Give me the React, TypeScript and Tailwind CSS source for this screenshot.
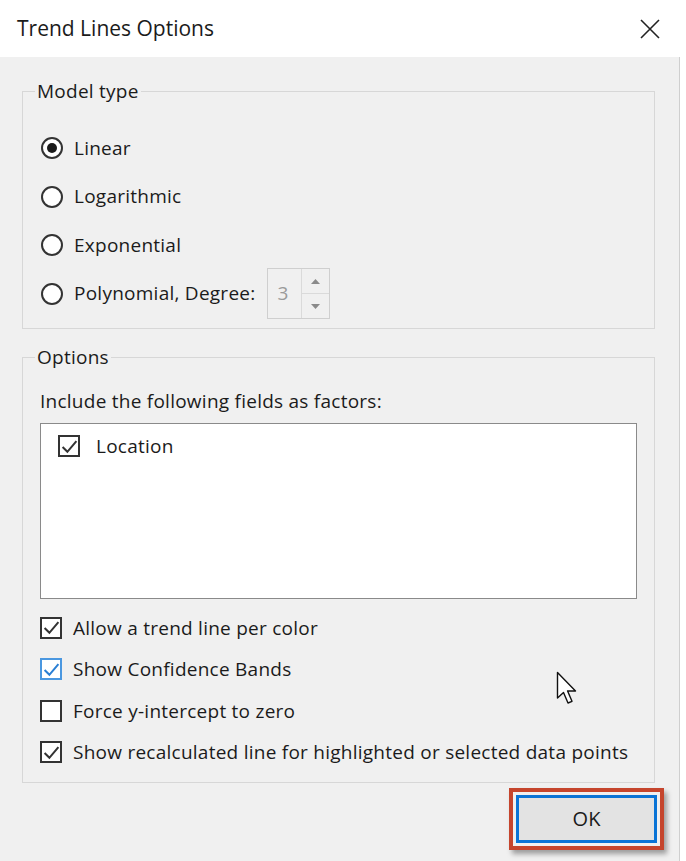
import React from "react";

const font = { fontFamily: '"Open Sans", "Noto Sans", Arial, sans-serif' };

function Radio({ checked, label, children }: { checked?: boolean; label: string; children?: React.ReactNode }) {
  return (
    <div className="flex h-[34px] items-center">
      <span className="flex h-[22px] w-[22px] items-center justify-center rounded-full border-2 border-[#333] bg-white">
        {checked && <span className="h-[10px] w-[10px] rounded-full bg-[#1a1a1a]" />}
      </span>
      <span className="ml-[11px] text-[19px] tracking-[0.25px] text-[#1b1b1b]">{label}</span>
      {children}
    </div>
  );
}

function Check({ checked, blue, label }: { checked?: boolean; blue?: boolean; label: string }) {
  const stroke = blue ? "#2a7fd4" : "#333";
  return (
    <div className="flex h-[41.5px] items-center">
      <span
        className={
          "flex h-[22px] w-[22px] items-center justify-center border-2 bg-white " +
          (blue ? "border-[#4a97e0]" : "border-[#333]")
        }
      >
        {checked && (
          <svg width="17" height="17" viewBox="0 0 16 16">
            <path d="M1.5 8.5 L6 13 L14.5 3" fill="none" stroke={stroke} strokeWidth="1.9" />
          </svg>
        )}
      </span>
      <span className="ml-[11px] text-[19px] tracking-[0.25px] text-[#1b1b1b]">{label}</span>
    </div>
  );
}

export default function App() {
  return (
    <div className="relative h-[861px] w-[686px] overflow-hidden bg-white" style={font}>
      {/* title bar */}
      <div className="flex h-[57px] items-center justify-between pl-[17px] pr-[26px]">
        <span className="text-[21px] text-[#1b1b1b]">Trend Lines Options</span>
        <svg width="20" height="20" viewBox="0 0 20 20">
          <path d="M1 1 L19 19 M19 1 L1 19" stroke="#222" strokeWidth="1.6" fill="none" />
        </svg>
      </div>

      {/* body */}
      <div className="h-[804px] w-[680px] border-r border-[#cfcfcf] bg-[#f0f0f0] pl-[22px] pr-[24px] pt-[22px]">
        <fieldset className="h-[250px] border border-[#d7d7d7]">
          <legend className="ml-[12px] px-[2px] text-[19px] leading-[24px] tracking-[0.25px] text-[#1b1b1b]">
            Model type
          </legend>
          <div className="flex flex-col gap-[14.5px] pl-[18px] pt-[28px]">
            <Radio checked label="Linear" />
            <Radio label="Logarithmic" />
            <Radio label="Exponential" />
            <Radio label="Polynomial, Degree:">
              <div className="ml-[12px] flex h-[51px] w-[63px] border border-[#cfcfcf] bg-[#f0f0f0]">
                <span className="flex w-[33px] items-center pl-[9px] text-[19px] text-[#9a9a9a]">3</span>
                <div className="flex flex-1 flex-col border-l border-[#dadada]">
                  <div className="flex flex-1 items-center justify-center border-b border-[#dadada]">
                    <svg width="9" height="5" viewBox="0 0 9 5">
                      <path d="M0 5 L4.5 0 L9 5Z" fill="#8a8a8a" />
                    </svg>
                  </div>
                  <div className="flex flex-1 items-center justify-center">
                    <svg width="9" height="5" viewBox="0 0 9 5">
                      <path d="M0 0 L4.5 5 L9 0Z" fill="#8a8a8a" />
                    </svg>
                  </div>
                </div>
              </div>
            </Radio>
          </div>
        </fieldset>

        <fieldset className="mt-[16px] h-[438px] border border-[#d7d7d7]">
          <legend className="ml-[12px] px-[2px] text-[19px] leading-[24px] tracking-[0.25px] text-[#1b1b1b]">
            Options
          </legend>
          <div className="px-[17px]">
            <div className="pt-[20px] text-[19px] leading-[24px] tracking-[0.25px] text-[#1b1b1b]">
              Include the following fields as factors:
            </div>
            <div className="mt-[10px] h-[176px] border border-[#8a8a8a] bg-white pl-[17px] pt-[8px]">
              <div className="flex items-center">
                <span className="flex h-[22px] w-[22px] items-center justify-center border-2 border-[#333] bg-white">
                  <svg width="17" height="17" viewBox="0 0 16 16">
                    <path d="M1.5 8.5 L6 13 L14.5 3" fill="none" stroke="#333" strokeWidth="1.9" />
                  </svg>
                </span>
                <span className="ml-[16px] text-[19px] tracking-[0.25px] text-[#1b1b1b]">Location</span>
              </div>
            </div>
            <div className="mt-[8px] flex flex-col">
              <Check checked label="Allow a trend line per color" />
              <Check checked blue label="Show Confidence Bands" />
              <Check label="Force y-intercept to zero" />
              <Check checked label="Show recalculated line for highlighted or selected data points" />
            </div>
          </div>
        </fieldset>

        <div className="mt-[5px] flex justify-end">
          <div className="-mr-[9px] border-4 border-[#c5452d] p-[3px] shadow-[3px_4px_5px_rgba(0,0,0,0.35)]">
            <div className="flex h-[48px] w-[141px] items-center justify-center border-[3px] border-[#0a74d6] bg-[#e3e3e3] text-[20px] text-[#1b1b1b]">
              OK
            </div>
          </div>
        </div>
      </div>

      {/* mouse cursor */}
      <svg className="absolute left-[556px] top-[671px]" width="26" height="38" viewBox="0 0 26 38">
        <path
          d="M1.5 1.5 L1.5 27 L7.5 21.5 L12 32 L16 30.3 L11.6 20 L19.5 20 Z"
          fill="#fff"
          stroke="#111"
          strokeWidth="1.4"
          strokeLinejoin="round"
        />
      </svg>
    </div>
  );
}
